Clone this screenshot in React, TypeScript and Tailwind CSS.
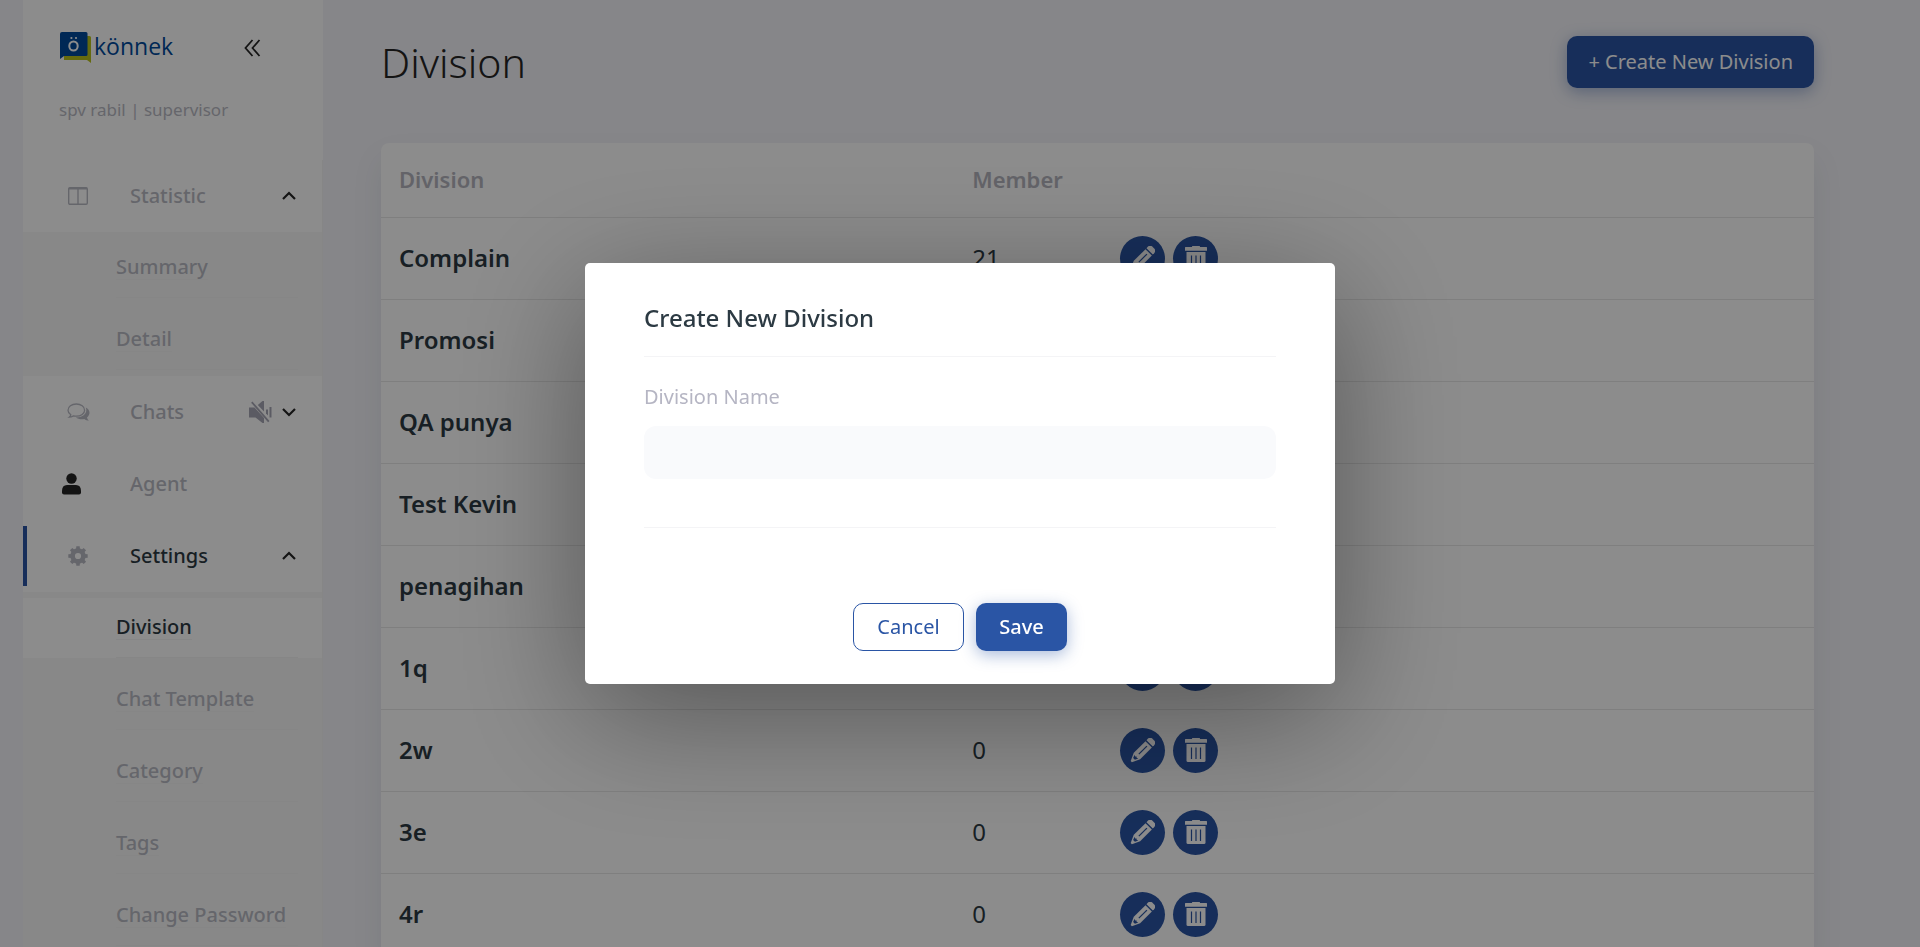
import React, { useState } from "react";

type Row = { name: string; members: number };

const rows: Row[] = [
  { name: "Complain", members: 21 },
  { name: "Promosi", members: 0 },
  { name: "QA punya", members: 0 },
  { name: "Test Kevin", members: 0 },
  { name: "penagihan", members: 0 },
  { name: "1q", members: 0 },
  { name: "2w", members: 0 },
  { name: "3e", members: 0 },
  { name: "4r", members: 0 },
];

function Logo() {
  return (
    <a href="#home" className="flex items-start gap-0.5" aria-label="könnek">
      <svg width="32" height="32" viewBox="0 0 32 32" aria-hidden="true">
        <path d="M4 4H29.500Q31 4 31 5.500V31L27 28H4Z" fill="#b9c11a" />
        <path d="M2 0H26Q27.500 0 27.500 1.500V22.500Q27.500 24 26 24H4L0 27V2Q0 0 2 0Z" fill="#004a9c" />
        <ellipse cx="13.500" cy="14" rx="4.200" ry="4.600" fill="none" stroke="#fff" strokeWidth="2" />
        <circle cx="11.400" cy="6" r="1.100" fill="#fff" />
        <circle cx="16" cy="6" r="1.100" fill="#fff" />
      </svg>
      <span className="font-['Open_Sans',sans-serif] text-[23px] leading-7 font-medium text-[#004a9c]">könnek</span>
    </a>
  );
}

function ColumnsIcon() {
  return (
    <svg width="20" height="18" viewBox="0 0 20 18" fill="none" stroke="currentColor" aria-hidden="true">
      <rect x="0.700" y="0.700" width="18.600" height="16.600" rx="1.200" strokeWidth="1.400" />
      <path d="M1 1.500H19" strokeWidth="2" />
      <path d="M10 2V17" strokeWidth="1.400" />
    </svg>
  );
}

function ChatsIcon() {
  return (
    <svg width="23" height="18" viewBox="0 0 23 18" aria-hidden="true">
      <path
        d="M9.300 1C4.600 1 1 3.700 1 7.200C1 9.100 2.100 10.700 3.800 11.800C3.600 12.800 3 13.600 2.200 14.200C4 14.200 5.500 13.500 6.600 12.900C7.500 13.100 8.400 13.200 9.300 13.200C14 13.200 17.600 10.600 17.600 7.200C17.600 3.700 14 1 9.300 1Z"
        fill="none"
        stroke="currentColor"
        strokeWidth="1.300"
      />
      <path
        d="M18.800 4.500C21.200 5.700 22.500 7.600 22.500 9.800C22.500 11.600 21.500 13.200 20 14.400C20.200 15.600 20.900 16.600 22 17.600C20.200 17.600 18.600 16.900 17.300 15.900C14.300 16.500 11 16 8.800 14.400C14.500 14.500 19.500 11.600 19.300 7C19.300 6.100 19.100 5.300 18.800 4.500Z"
        fill="currentColor"
      />
    </svg>
  );
}

function MutedIcon() {
  return (
    <svg width="23" height="22" viewBox="0 0 23 22" fill="#a6a6b4" aria-hidden="true">
      <path d="M0 6.500H5.500L15 17V22H13.500L6.500 16.500H0Z" />
      <path d="M8.800 4L13.500 0H15V10.500Z" />
      <path d="M2.800 1.200L19.800 20.600" stroke="#a6a6b4" strokeWidth="1.800" />
      <path d="M17 8.500H19V14.500L17 12.500Z" />
      <path d="M20.500 6H22.500V16.500H20.500Z" />
    </svg>
  );
}

function PersonIcon() {
  return (
    <svg width="19" height="22" viewBox="0 0 19 22" fill="#262626" aria-hidden="true">
      <circle cx="9.500" cy="5.500" r="5.200" />
      <path d="M5 12H14Q19 12 19 18V19.500Q19 21.500 17 21.500H2Q0 21.500 0 19.500V18Q0 12 5 12Z" />
    </svg>
  );
}

function GearIcon() {
  return (
    <svg width="20" height="20" viewBox="0 0 20 20" aria-hidden="true">
      <circle cx="10" cy="10" r="5.400" fill="none" stroke="currentColor" strokeWidth="4.600" />
      <g fill="currentColor">
        {[0, 45, 90, 135, 180, 225, 270, 315].map((a) => (
          <path key={a} d="M8 3.500L8.300 0.300H11.700L12 3.500Z" transform={`rotate(${a} 10 10)`} />
        ))}
      </g>
    </svg>
  );
}

function Caret({ open }: { open: boolean }) {
  return (
    <svg width="14" height="10" viewBox="0 0 14 10" fill="none" stroke="#262626" strokeWidth="2.200" aria-hidden="true">
      <path d={open ? "M1 8L7 2L13 8" : "M1 2L7 8L13 2"} />
    </svg>
  );
}

function PencilIcon() {
  return (
    <svg width="25" height="25" viewBox="0 0 24 24" aria-hidden="true">
      <g transform="rotate(45 12 12)">
        <path d="M7.700 2.300V0.500Q7.700 -2.700 10.500 -2.700H13.500Q16.300 -2.700 16.300 0.500V2.300Z" fill="#fff" />
        <path d="M7.700 3.600H16.300V19.500L12.800 27.200H11.200L7.700 19.500Z" fill="#fff" />
        <path d="M12 6V17" stroke="#2a55a5" strokeWidth="1.200" />
        <path d="M9.500 20.200L11 21L12 20L13 21L14.500 20.200L13.200 23.500H10.800Z" fill="#2a55a5" />
      </g>
    </svg>
  );
}

function TrashIcon() {
  return (
    <svg width="22" height="24" viewBox="0 0 22 24" aria-hidden="true">
      <path d="M7 1V0.600Q7 0 7.600 0H14.400Q15 0 15 0.600V1H21.400Q22 1 22 1.600V4.700H0V1.600Q0 1 0.600 1Z" fill="#fff" />
      <path d="M1.500 6H20.500V22.500Q20.500 24 19 24H3Q1.500 24 1.500 22.500Z" fill="#fff" />
      <path d="M6.500 9.500V21M11 9.500V21M15.500 9.500V21" stroke="#2a55a5" strokeWidth="1.200" />
    </svg>
  );
}

type MenuProps = {
  label: string;
  icon: React.ReactNode;
  active?: boolean;
  iconClass?: string;
  children?: React.ReactNode;
};

function MenuItem({ label, icon, active, iconClass = "pl-10", children }: MenuProps) {
  return (
    <div className="py-1.5">
      <a
        href={`#${label.toLowerCase()}`}
        className={`flex h-[60px] items-center border-l-4 pr-[26px] ${active ? "border-[#2a55a5] text-[#2c3a43]" : "border-transparent text-[#b9bac4]"}`}
      >
        <span className={`w-[103px] text-[#b9bac4] ${iconClass}`}>{icon}</span>
        <span className="flex-1 text-xl font-medium">{label}</span>
        <span className="flex items-center gap-2.5">{children}</span>
      </a>
    </div>
  );
}

function SubMenu({ items, active }: { items: string[]; active?: string }) {
  return (
    <ul className="bg-[#f8f8f8]">
      {items.map((item) => (
        <li key={item} className="py-1.5">
          <a
            href={`#${item.toLowerCase().replace(" ", "-")}`}
            className={`flex h-[60px] pr-6 pl-[93px] ${item === active ? "bg-white text-[#2c3a43]" : "text-[#b9bac4]"}`}
          >
            <span className="flex flex-1 items-center border-b border-[#f4f4f4]">
              <span className="border-b border-[#f4f4f4] text-xl leading-6 font-medium whitespace-nowrap">{item}</span>
            </span>
          </a>
        </li>
      ))}
    </ul>
  );
}

function Sidebar() {
  return (
    <aside className="flex w-[300px] shrink-0 flex-col bg-white">
      <div className="flex h-40 shrink-0 flex-col px-9 pt-8">
        <div className="flex items-center justify-between pr-[26px] pl-px">
          <Logo />
          <button type="button" aria-label="Collapse menu">
            <svg width="17" height="18" viewBox="0 0 17 18" fill="none" stroke="#262626" strokeWidth="1.800" aria-hidden="true">
              <path d="M8.500 1L1.500 9L8.500 17M15.500 1L8.500 9L15.500 17" />
            </svg>
          </button>
        </div>
        <p className="mt-[34px] text-[17px] leading-6 text-[#b9bac4]">spv rabil | supervisor</p>
      </div>
      <nav className="flex-1 border-r border-[#f4f4f4]">
        <MenuItem label="Statistic" icon={<ColumnsIcon />} iconClass="pl-[41px]">
          <Caret open />
        </MenuItem>
        <SubMenu items={["Summary", "Detail"]} />
        <MenuItem label="Chats" icon={<ChatsIcon />}>
          <MutedIcon />
          <Caret open={false} />
        </MenuItem>
        <MenuItem label="Agent" icon={<PersonIcon />} iconClass="pl-[35px]" />
        <MenuItem label="Settings" icon={<GearIcon />} iconClass="pl-[41px]" active>
          <Caret open />
        </MenuItem>
        <SubMenu items={["Division", "Chat Template", "Category", "Tags", "Change Password"]} active="Division" />
      </nav>
    </aside>
  );
}

function RoundButton({ label, children }: { label: string; children: React.ReactNode }) {
  return (
    <button type="button" aria-label={label} className="flex size-[45px] items-center justify-center rounded-full bg-[#2a55a5]">
      {children}
    </button>
  );
}

function CreateDialog() {
  const [name, setName] = useState("");
  return (
    <div className="fixed inset-0 flex items-center justify-center bg-black/45">
      <form
        role="dialog"
        aria-labelledby="dialog-title"
        onSubmit={(e) => e.preventDefault()}
        className="w-[750px] rounded-[5px] bg-white px-[59px] pt-9 pb-[33px] shadow-[0_30px_130px_rgba(0,0,0,0.4)]"
      >
        <h2 id="dialog-title" className="border-b border-[#f4f4f6] pt-[5px] pb-6 text-2xl leading-7 font-medium text-[#2c3a43]">
          Create New Division
        </h2>
        <div className="border-b border-[#f4f4f6] pt-7 pb-12">
          <label htmlFor="division-name" className="block text-xl leading-6 text-[#b5b5c3]">
            Division Name
          </label>
          <input
            id="division-name"
            value={name}
            onChange={(e) => setName(e.target.value)}
            className="mt-[17px] block h-[53px] w-full rounded-xl bg-[#f9fafc] px-4 text-xl outline-none"
          />
        </div>
        <div className="mt-[75px] flex justify-center gap-3">
          <button type="button" className="h-12 w-[111px] rounded-[10px] border border-[#2a55a5] text-xl text-[#2a55a5]">
            Cancel
          </button>
          <button
            type="submit"
            className="h-12 w-[91px] rounded-[10px] bg-[#2a55a5] text-xl font-medium text-white shadow-[0_4px_16px_rgba(42,85,165,0.4)]"
          >
            Save
          </button>
        </div>
      </form>
    </div>
  );
}

export default function App() {
  return (
    <div className="flex h-screen overflow-hidden bg-[#f4f4f9] pl-[23px] font-['Noto_Sans',sans-serif]">
      <Sidebar />
      <main className="flex-1 pt-9 pr-[106px] pl-[58px]">
        <header className="flex items-center justify-between">
          <h1 className="text-[41px] leading-[52px] font-[350] text-[#262626]">Division</h1>
          <button
            type="button"
            className="h-[52px] rounded-[10px] bg-[#2a55a5] px-[21px] text-xl text-white shadow-[0_4px_16px_rgba(42,85,165,0.4)]"
          >
            + Create New Division
          </button>
        </header>
        <div className="mt-[55px] rounded-lg bg-white shadow-[0_16px_32px_rgba(0,50,80,0.08)]">
          <table className="w-full table-fixed border-collapse text-left text-2xl text-[#2c3a43]">
            <thead>
              <tr className="h-[74px] border-b border-[#e8e8e8] text-[22px] text-[#b5b5be]">
                <th className="w-[40%] px-[18px] font-semibold">Division</th>
                <th className="w-[148px] px-[18px] font-semibold">Member</th>
                <th className="px-[18px]" aria-label="Actions" />
              </tr>
            </thead>
            <tbody>
              {rows.map((row) => (
                <tr key={row.name} className="h-[82px] border-b border-[#e8e8e8]">
                  <th scope="row" className="px-[18px] font-semibold">
                    {row.name}
                  </th>
                  <td className="px-[18px]">{row.members}</td>
                  <td className="px-[18px]">
                    <div className="flex gap-2">
                      <RoundButton label={`Edit ${row.name}`}>
                        <PencilIcon />
                      </RoundButton>
                      <RoundButton label={`Delete ${row.name}`}>
                        <TrashIcon />
                      </RoundButton>
                    </div>
                  </td>
                </tr>
              ))}
            </tbody>
          </table>
        </div>
      </main>
      <CreateDialog />
    </div>
  );
}
